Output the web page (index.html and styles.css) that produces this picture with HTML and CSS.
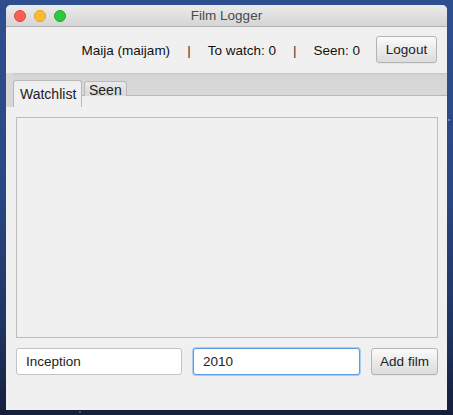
FILE: index.html
```html
<!DOCTYPE html>
<html>
<head>
<meta charset="utf-8">
<link rel="stylesheet" href="styles.css">
</head>
<body>
<div class="window">
  <div class="titlebar">
    <div class="lights">
      <span class="light red"></span>
      <span class="light yellow"></span>
      <span class="light green"></span>
    </div>
    <div class="title">Film Logger</div>
  </div>
  <div class="toolbar">
    <span class="user">Maija (maijam)</span>
    <span class="sep">|</span>
    <span class="stat">To watch: 0</span>
    <span class="sep">|</span>
    <span class="stat">Seen: 0</span>
    <button class="btn logout">Logout</button>
  </div>
  <div class="tabbar">
    <div class="tab-spacer"></div>
    <div class="tab active">Watchlist</div>
    <div class="tab">Seen</div>
  </div>
  <div class="content">
    <div class="list"></div>
    <div class="form">
      <input class="field" type="text" value="Inception">
      <input class="field focused" type="text" value="2010">
      <button class="btn add">Add film</button>
    </div>
  </div>
</div>
</body>
</html>
```

FILE: styles.css
```css
html, body {
  margin: 0;
  padding: 0;
}
body {
  width: 453px;
  height: 415px;
  overflow: hidden;
  background:
    radial-gradient(circle at 12px 60px, rgba(255,255,255,0.5) 0 0.6px, transparent 1px),
    radial-gradient(circle at 449px 120px, rgba(255,255,255,0.4) 0 0.6px, transparent 1px),
    radial-gradient(circle at 80px 412px, rgba(255,255,255,0.3) 0 0.6px, transparent 1px),
    linear-gradient(180deg, #2e4f8f 0%, #2a4783 45%, #1f3460 80%, #141f3a 100%);
  font-family: "Liberation Sans", Arial, sans-serif;
  font-size: 13.5px;
  color: #111;
  padding-top: 5px;
  box-sizing: border-box;
}
.window {
  margin-left: 6px;
  width: 441px;
  height: 405px;
  background: #f0f0f0;
  border-radius: 5px 5px 0 0;
  display: flex;
  flex-direction: column;
  overflow: hidden;
}
.titlebar {
  height: 21px;
  flex: none;
  background: linear-gradient(180deg, #ebebeb 0%, #d5d5d5 100%);
  border-bottom: 1px solid #b3b3b3;
  display: flex;
  align-items: center;
  position: relative;
}
.lights {
  display: flex;
  gap: 8px;
  padding-left: 8px;
}
.light {
  width: 12px;
  height: 12px;
  border-radius: 50%;
  box-sizing: border-box;
}
.red { background: #fc5f57; border: 1px solid #e0443e; }
.yellow { background: #fdbc2e; border: 1px solid #dea123; }
.green { background: #2dc840; border: 1px solid #1aab29; }
.title {
  position: absolute;
  left: 0;
  right: 0;
  text-align: center;
  color: #4a4a4a;
  font-size: 13.5px;
  top: 3px;
}
.toolbar {
  height: 46px;
  flex: none;
  display: flex;
  align-items: center;
  justify-content: flex-end;
  padding-right: 10px;
  gap: 17px;
  background: #f0f0f0;
}
.sep { color: #333; }
.btn {
  font-family: "Liberation Sans", Arial, sans-serif;
  font-size: 13.5px;
  color: #222;
  background: linear-gradient(180deg, #fbfbfb 0%, #e9e9e9 55%, #dcdcdc 100%);
  border: 1px solid #b4b4b4;
  border-radius: 3px;
  height: 27px;
  padding: 0;
  box-shadow: 0 1px 0 rgba(0,0,0,0.04);
}
.logout {
  width: 61px;
  margin-left: -1px;
  margin-top: -2px;
}
.tabbar {
  height: 34px;
  flex: none;
  display: flex;
  align-items: flex-start;
  background: linear-gradient(180deg, #c9c9c9 0px, #d6d6d6 3px, #d8d8d8 22px, #b8b8b8 22px, #b8b8b8 23px, transparent 23px);
}
.tab-spacer {
  width: 7px;
  height: 34px;
  background: #d8d8d8;
}
.tab {
  margin-top: 8px;
  box-sizing: border-box;
  height: 15px;
  padding: 0 4px;
  line-height: 16px;
  font-size: 14px;
  color: #222;
  border: 1px solid #b9b9b9;
  border-bottom: none;
  border-radius: 3px 3px 0 0;
  background: linear-gradient(180deg, #eaeaea, #d9d9d9);
  margin-left: 2px;
  overflow: visible;
}
.tab.active {
  margin-top: 7px;
  margin-left: 0;
  background: #f0f0f0;
  padding: 0 5px 0 6px;
  line-height: 26px;
  height: 27px;
  width: 69px;
}
.content {
  flex: 1;
  padding: 10px 9px 0 10px;
  display: flex;
  flex-direction: column;
}
.list {
  height: 219px;
  border: 1px solid #bdbdbd;
  background: #f0f0f0;
}
.form {
  margin-top: 10px;
  display: flex;
  gap: 11px;
}
.field {
  font-family: "Liberation Sans", Arial, sans-serif;
  font-size: 13.5px;
  color: #222;
  box-sizing: border-box;
  height: 27px;
  width: 166px;
  border: 1px solid #c3c3c3;
  border-radius: 3px;
  background: #fff;
  padding: 0 9px;
  outline: none;
}
.field.focused {
  width: 167px;
  border-color: #5a9de2;
  box-shadow: 0 0 0 1px #a8cdf1;
}
.add {
  width: 69px;
}
```
